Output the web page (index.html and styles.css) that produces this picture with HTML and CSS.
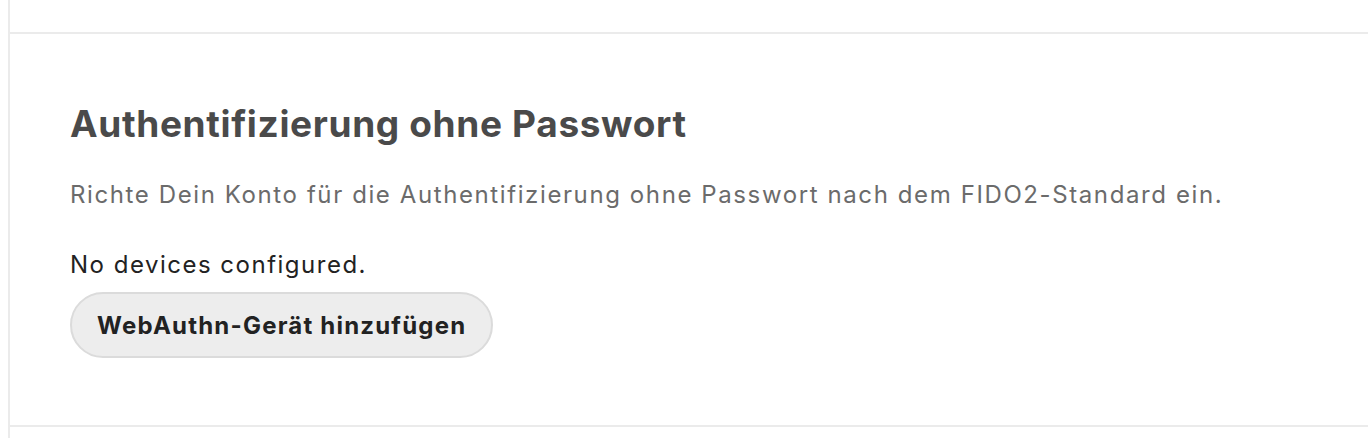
FILE: index.html
```html
<!DOCTYPE html>
<html lang="de">
<head>
<meta charset="utf-8">
<link rel="stylesheet" href="styles.css">
</head>
<body>
<div class="page">
  <div class="section-top"></div>
  <section class="section">
    <h2 class="title">Authentifizierung ohne Passwort</h2>
    <p class="desc">Richte Dein Konto für die Authentifizierung ohne Passwort nach dem FIDO2-Standard ein.</p>
    <p class="empty">No devices configured.</p>
    <button class="btn" type="button">WebAuthn-Gerät hinzufügen</button>
  </section>
  <div class="section-bottom"></div>
</div>
</body>
</html>
```
FILE: styles.css
```css
html, body {
  margin: 0;
  padding: 0;
  background: #ffffff;
}
body {
  padding-left: 8px;
  font-family: Inter, "Noto Sans", sans-serif;
  color: #222222;
}
.page {
  border-left: 2px solid #ebebeb;
  min-height: 100vh;
  box-sizing: border-box;
}
.section-top {
  height: 32px;
  border-bottom: 2px solid #ebebeb;
}
.section {
  padding: 68px 60px 67px;
  border-bottom: 2px solid #ebebeb;
  display: flex;
  flex-direction: column;
  align-items: flex-start;
}
.title {
  margin: 0;
  font-size: 37px;
  line-height: 44px;
  font-weight: 700;
  letter-spacing: 0.65px;
  color: #4a4a4a;
}
.desc {
  margin: 33px 0 0;
  font-size: 24px;
  line-height: 32px;
  letter-spacing: 1.6px;
  color: #6b6b6b;
}
.empty {
  margin: 38px 0 0;
  font-size: 24px;
  line-height: 32px;
  letter-spacing: 1.5px;
  color: #222222;
}
.btn {
  margin-top: 11px;
  height: 66px;
  padding: 0 25px;
  border: 2px solid #dbdbdb;
  border-radius: 33px;
  background: #ededed;
  font-family: inherit;
  font-size: 24px;
  font-weight: 700;
  letter-spacing: 1.2px;
  color: #222222;
}
```
